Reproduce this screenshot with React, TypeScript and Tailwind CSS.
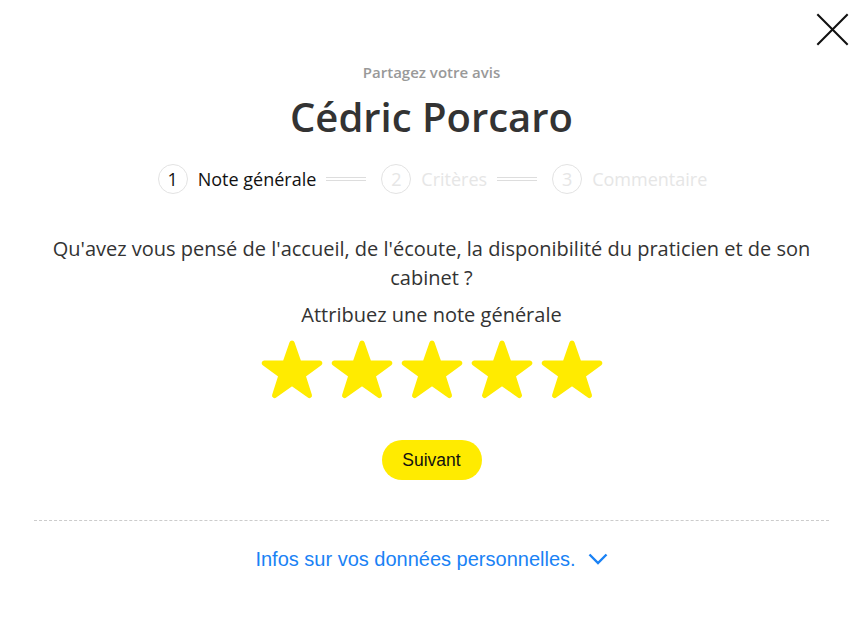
import React from "react";

const steps = [
  { n: 1, label: "Note générale", active: true },
  { n: 2, label: "Critères", active: false },
  { n: 3, label: "Commentaire", active: false },
];

function Star() {
  return (
    <svg viewBox="0 0 24 24" className="h-[64px] w-[64px]" fill="#ffeb00">
      <path
        d="M12 1.6c.3 0 .55.18.65.46l2.45 7.04h7.3c.66 0 .94.85.4 1.24l-5.9 4.3 2.27 7.07c.2.63-.52 1.15-1.06.76L12 18.1l-6.1 4.37c-.54.39-1.26-.13-1.06-.76l2.27-7.07-5.9-4.3c-.54-.39-.26-1.24.4-1.24h7.3l2.45-7.04c.1-.28.35-.46.64-.46z"
        stroke="#ffeb00"
        strokeWidth="0.6"
        strokeLinejoin="round"
      />
    </svg>
  );
}

export default function App() {
  return (
    <div className="relative min-h-[637px] w-full bg-white font-['Open_Sans',sans-serif]">
      <button className="absolute right-[14px] top-[13px] h-[33px] w-[33px]" aria-label="Fermer">
        <svg viewBox="0 0 32 32" className="h-full w-full" stroke="#111" strokeWidth="2" strokeLinecap="square">
          <path d="M2 2l28 28M30 2L2 30" />
        </svg>
      </button>

      <div className="flex flex-col items-center px-[34px] pt-[61px]">
        <p className="text-[15px] font-semibold leading-[22px] text-[#999]">Partagez votre avis</p>
        <h1 className="mt-[6px] text-[40px] font-semibold leading-[56px] text-[#333]">Cédric Porcaro</h1>

        <div className="ml-[2px] mt-[19px] flex items-center">
          {steps.map((s, i) => (
            <React.Fragment key={s.n}>
              {i > 0 && <span className="ml-[10px] mr-[15px] h-[4px] w-[40px] border-y border-[#ddd]" />}
              <div className="flex items-center gap-[10px]">
                <span
                  className={`flex h-[30px] w-[30px] items-center justify-center rounded-full border border-[#e3e3e3] text-[18px] ${
                    s.active ? "text-[#111]" : "text-[#e6e6e6]"
                  }`}
                >
                  {s.n}
                </span>
                <span className={`text-[18px] ${s.active ? "text-[#111]" : "text-[#e6e6e6]"}`}>{s.label}</span>
              </div>
            </React.Fragment>
          ))}
        </div>

        <p className="mt-[40px] max-w-[790px] text-center text-[20px] leading-[29px] text-[#333]">
          Qu'avez vous pensé de l'accueil, de l'écoute, la disponibilité du praticien et de son cabinet ?
        </p>
        <p className="mt-[8px] text-[20px] leading-[29px] text-[#333]">Attribuez une note générale</p>

        <div className="mt-[8px] flex gap-[6px]">
          {[0, 1, 2, 3, 4].map((i) => (
            <Star key={i} />
          ))}
        </div>

        <button className="mt-[39px] h-[40px] w-[100px] rounded-full bg-[#ffeb00] font-['Liberation_Sans',Arial,sans-serif] text-[17.5px] text-[#111]">
          Suivant
        </button>

        <div className="mt-[40px] w-full border-t border-dashed border-[#ccc]" />

        <button className="mt-[23px] flex items-center gap-[12px] font-['Liberation_Sans',Arial,sans-serif] text-[20px] text-[#1a82f5]">
          Infos sur vos données personnelles.
          <svg viewBox="0 0 20 12" className="h-[12px] w-[20px]" fill="none" stroke="#1a82f5" strokeWidth="2.4">
            <path d="M1.5 1.5L10 10l8.5-8.5" />
          </svg>
        </button>
      </div>
    </div>
  );
}
